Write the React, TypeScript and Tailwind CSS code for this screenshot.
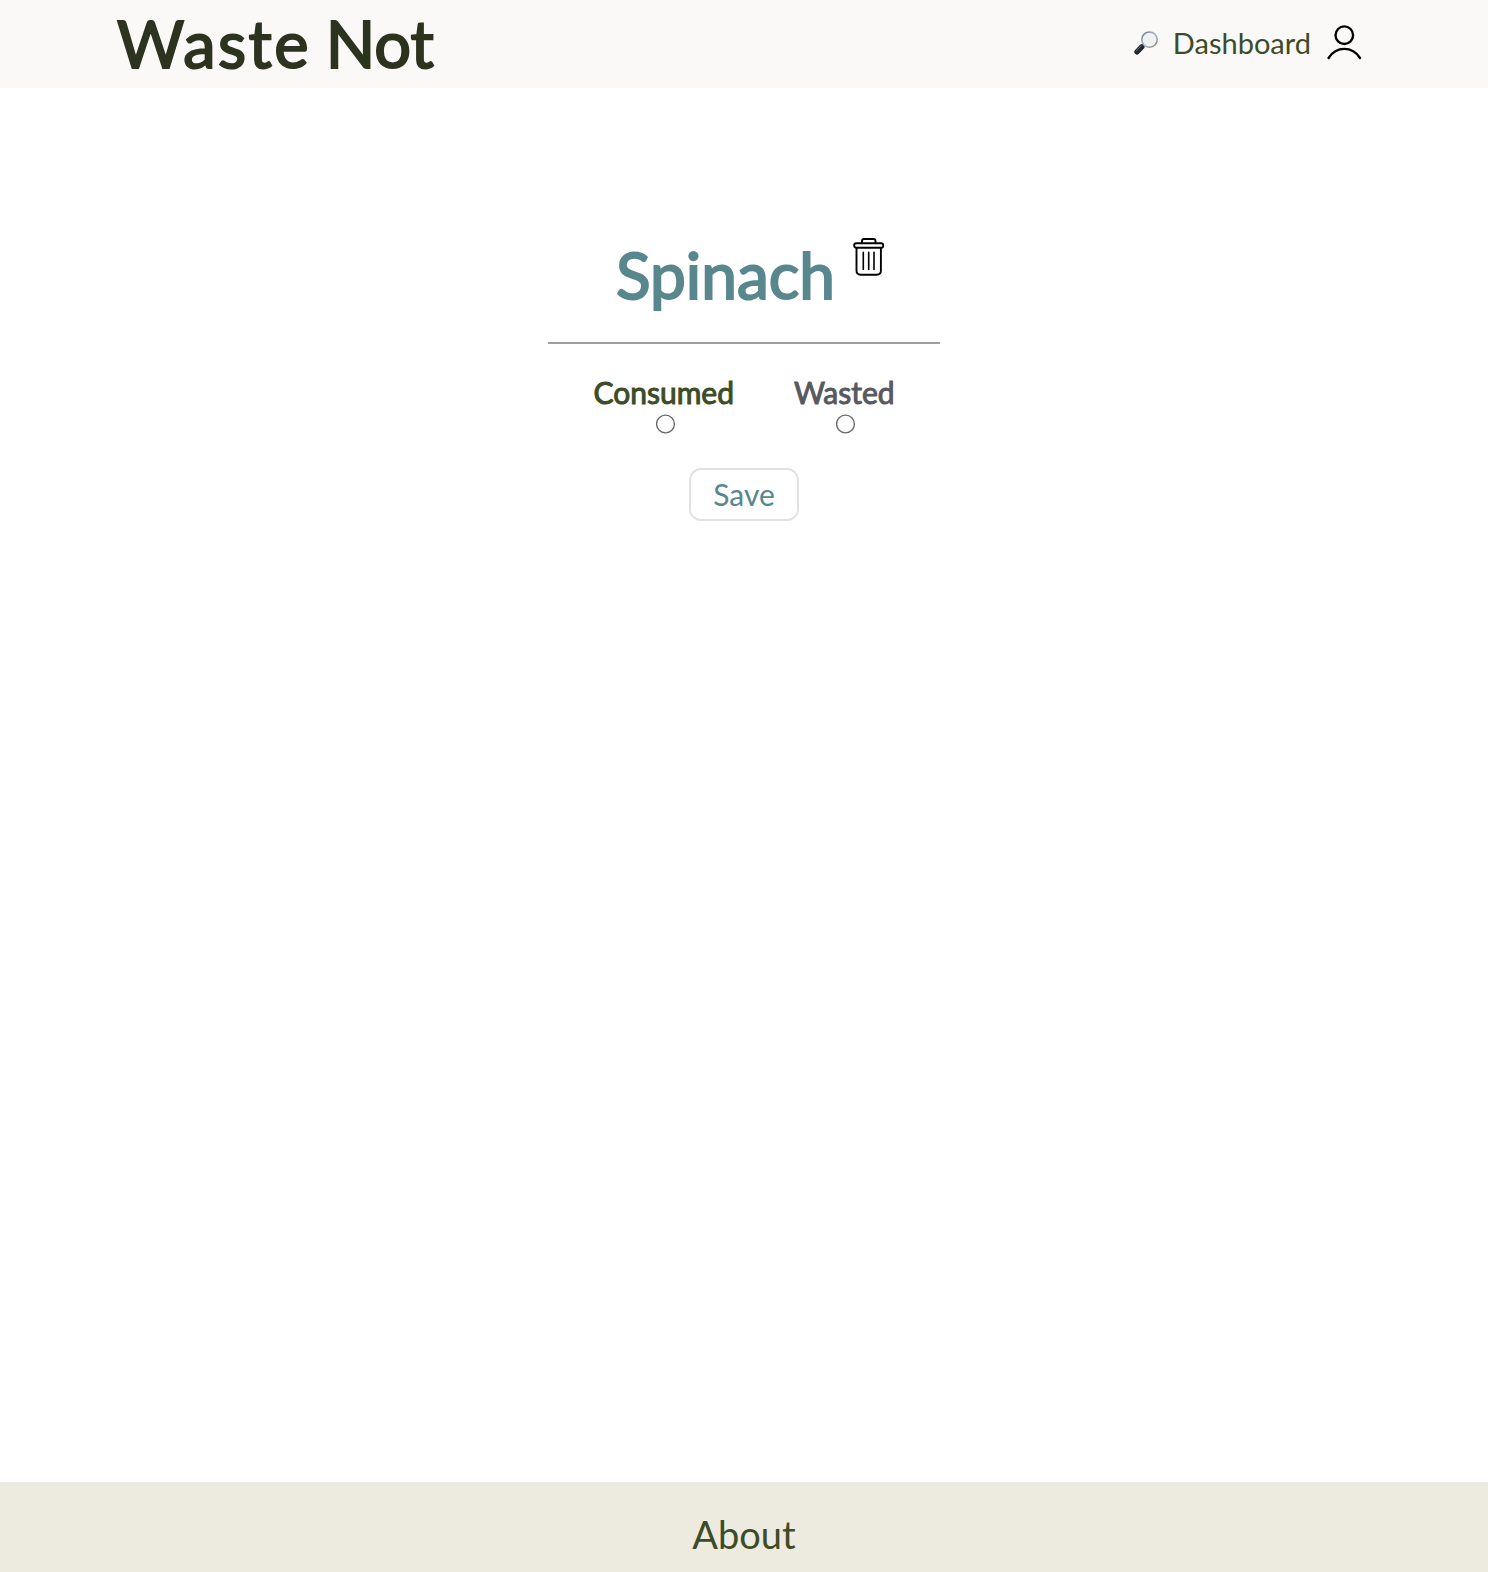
function MagnifierIcon() {
  return (
    <svg width="26" height="26" viewBox="0 0 26 26" aria-hidden="true">
      <defs>
        <linearGradient id="rim" x1="0" y1="0" x2="1" y2="1">
          <stop offset="0" stopColor="#6f7580" />
          <stop offset="0.5" stopColor="#a9b7cb" />
          <stop offset="1" stopColor="#85807a" />
        </linearGradient>
      </defs>
      <path d="M7.700 17.100l2.900-2.900" stroke="#8a8c90" strokeWidth="2.400" />
      <path d="M3 21.800l4.800-4.900" stroke="#25282e" strokeWidth="5.400" strokeLinecap="round" />
      <path d="M2.400 20.600l4.600-4.800" stroke="#6c7078" strokeWidth="1" strokeLinecap="round" />
      <circle cx="15.500" cy="9.600" r="7.700" fill="#f0f1f3" stroke="url(#rim)" strokeWidth="1.500" />
    </svg>
  );
}

function UserIcon() {
  return (
    <svg width="36" height="36" viewBox="0 0 36 36" fill="none" stroke="#000" strokeWidth="2.4" strokeLinecap="round" aria-hidden="true">
      <circle cx="17.300" cy="10.200" r="8.800" />
      <path d="M1.600 33C5.300 27.200 10.800 23.900 17.300 23.900s12 3.300 15.700 9.100" />
    </svg>
  );
}

function TrashIcon() {
  return (
    <svg width="32" height="40" viewBox="0 0 32 40" fill="none" stroke="#000" strokeWidth="1.9" strokeLinecap="round" strokeLinejoin="round" aria-hidden="true">
      <path d="M9 6V4Q9 2 11 2H20.500Q22.500 2 22.500 4V6" />
      <rect x="1.200" y="6.300" width="29" height="4.400" rx="2" />
      <path d="M3.500 11V33.500Q3.500 37.700 7.700 37.700H23.700Q27.900 37.700 27.900 33.500V11" />
      <path d="M10.300 15.300V32.500M15.700 15.300V32.500M21 15.300V32.500" strokeWidth="1.600" />
    </svg>
  );
}

function Choice({ label, tone }: { label: string; tone: string }) {
  return (
    <label className={`flex flex-col items-center text-[30px] leading-9 [-webkit-text-stroke:1px_currentColor] ${tone}`}>
      {label}
      <svg width="20" height="20" viewBox="0 0 20 20" className="mt-[4px] ml-[4px]" aria-hidden="true">
        <circle cx="9.500" cy="10" r="8.900" fill="#fff" stroke="#6b6b6b" strokeWidth="1.400" />
      </svg>
      <input type="radio" name="outcome" className="sr-only" />
    </label>
  );
}

export default function App() {
  return (
    <div className="flex h-[1572px] flex-col bg-white font-['Lato',sans-serif]">
      <header className="flex h-[88px] items-center justify-between bg-[#faf9f7] pr-[125px] pb-[3px] pl-[117px]">
        <h1 className="text-[65px] leading-[82px] text-[#2c331f] [-webkit-text-stroke:2px_currentColor]">
          <span className="tracking-[2.5px]">Waste</span>
          <span className="[word-spacing:-2px]"> Not</span>
        </h1>
        <nav className="flex items-center text-[29px] text-[#3d4c28]">
          <MagnifierIcon />
          <a className="mr-4 ml-[13px]">Dashboard</a>
          <UserIcon />
        </nav>
      </header>
      <main className="flex grow flex-col items-center pt-[149px]">
        <div className="flex items-start pl-[13px]">
          <h2 className="text-[64px] leading-[76px] text-[#58878d] [-webkit-text-stroke:2px_currentColor]">Spinach</h2>
          <div className="ml-[18px]">
            <TrashIcon />
          </div>
        </div>
        <hr className="mt-[29px] w-[392px] border-t-2 border-[#9c9e9e]" />
        <div className="mt-[30px] flex gap-[60px]">
          <Choice label="Consumed" tone="text-[#3d4c28]" />
          <Choice label="Wasted" tone="text-[#58595f]" />
        </div>
        <button className="mt-[34px] h-[53px] w-[110px] rounded-[12px] border-2 border-[#e2e2e2] text-[30px] text-[#58878d]">
          Save
        </button>
      </main>
      <footer className="flex h-[90px] items-start justify-center bg-[#edeadf] pt-[27px] text-[38px] leading-[50px] text-[#3d4c28]">
        <a>About</a>
      </footer>
    </div>
  );
}
